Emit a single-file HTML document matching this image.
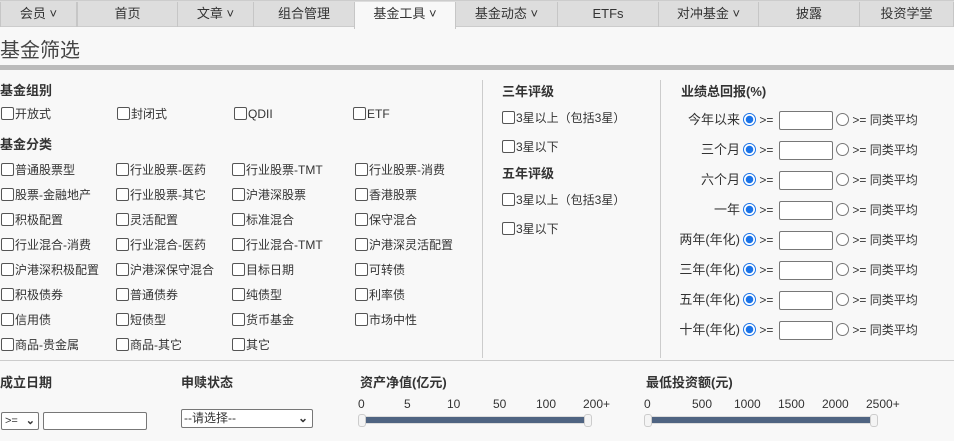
<!DOCTYPE html>
<html><head><meta charset="utf-8"><style>
*{margin:0;padding:0;box-sizing:border-box}
body{width:954px;height:441px;background:#f8f8f8;font-family:"Liberation Sans","Noto Sans CJK SC",sans-serif;font-size:12px;color:#333;position:relative;overflow:hidden}
.a{position:absolute;white-space:nowrap;line-height:14px}
.nav{position:absolute;top:0;left:0;width:954px;height:27px;background:#ddd;border-top:1px solid #ccc;border-bottom:1px solid #ccc}
.t{position:absolute;top:1px;height:25px;line-height:24px;text-align:center;font-size:13px;color:#333;border-right:1px solid #c6c6c6;border-left:1px solid #c6c6c6}
.t.on{background:#f8f8f8;height:27px}
.cb{display:inline-block;width:13px;height:13px;border:1px solid #555;border-radius:2px;background:#fff;vertical-align:-2px;margin-right:1px}
.h{font-weight:bold;font-size:13px;color:#333}
.r{display:inline-block;width:13px;height:13px;border-radius:50%;border:1px solid #777;background:#fff;vertical-align:-2px}
.r.on{border:1px solid #1a73e8;background:radial-gradient(circle,#1a73e8 0 3.5px,#fff 4px)}
.in{display:inline-block;width:54px;height:19px;border:1px solid #777;border-radius:2px;background:#fff;vertical-align:-6px;margin-left:2px}
.lab{display:inline-block;width:80px;text-align:right;font-size:13px;margin-right:3px}
.row{position:absolute;left:660px;white-space:nowrap;line-height:16px;font-size:12px}
</style></head><body>
<div class="nav">
<div class="t" style="left:0;width:77px">会员 ˅</div>
<div class="t" style="left:77px;width:101px">首页</div>
<div class="t" style="left:177px;width:77px">文章 ˅</div>
<div class="t" style="left:253px;width:102px">组合管理</div>
<div class="t on" style="left:354px;width:102px">基金工具 ˅</div>
<div class="t" style="left:455px;width:103px">基金动态 ˅</div>
<div class="t" style="left:557px;width:102px">ETFs</div>
<div class="t" style="left:658px;width:101px">对冲基金 ˅</div>
<div class="t" style="left:758px;width:102px">披露</div>
<div class="t" style="left:859px;width:95px">投资学堂</div>
</div>
<div class="a" style="left:0;top:40px;font-size:20px;line-height:22px;color:#444">基金筛选</div>
<div style="position:absolute;left:0;top:65px;width:954px;height:5px;background:#bbb"></div>
<div style="position:absolute;left:482px;top:80px;width:1px;height:278px;background:#ccc"></div>
<div style="position:absolute;left:660px;top:80px;width:1px;height:278px;background:#ccc"></div>
<div style="position:absolute;left:0;top:360px;width:954px;height:1px;background:#ccc"></div>

<div class="a h" style="left:0;top:84px">基金组别</div>
<div class="a" style="left:1px;top:107px"><span class="cb"></span>开放式</div>
<div class="a" style="left:117px;top:107px"><span class="cb"></span>封闭式</div>
<div class="a" style="left:234px;top:107px"><span class="cb"></span>QDII</div>
<div class="a" style="left:353px;top:107px"><span class="cb"></span>ETF</div>
<div class="a h" style="left:0;top:138px">基金分类</div>
<div class="a" style="left:1px;top:163px"><span class="cb"></span>普通股票型</div><div class="a" style="left:116px;top:163px"><span class="cb"></span>行业股票-医药</div><div class="a" style="left:232px;top:163px"><span class="cb"></span>行业股票-TMT</div><div class="a" style="left:355px;top:163px"><span class="cb"></span>行业股票-消费</div>
<div class="a" style="left:1px;top:188px"><span class="cb"></span>股票-金融地产</div><div class="a" style="left:116px;top:188px"><span class="cb"></span>行业股票-其它</div><div class="a" style="left:232px;top:188px"><span class="cb"></span>沪港深股票</div><div class="a" style="left:355px;top:188px"><span class="cb"></span>香港股票</div>
<div class="a" style="left:1px;top:213px"><span class="cb"></span>积极配置</div><div class="a" style="left:116px;top:213px"><span class="cb"></span>灵活配置</div><div class="a" style="left:232px;top:213px"><span class="cb"></span>标准混合</div><div class="a" style="left:355px;top:213px"><span class="cb"></span>保守混合</div>
<div class="a" style="left:1px;top:238px"><span class="cb"></span>行业混合-消费</div><div class="a" style="left:116px;top:238px"><span class="cb"></span>行业混合-医药</div><div class="a" style="left:232px;top:238px"><span class="cb"></span>行业混合-TMT</div><div class="a" style="left:355px;top:238px"><span class="cb"></span>沪港深灵活配置</div>
<div class="a" style="left:1px;top:263px"><span class="cb"></span>沪港深积极配置</div><div class="a" style="left:116px;top:263px"><span class="cb"></span>沪港深保守混合</div><div class="a" style="left:232px;top:263px"><span class="cb"></span>目标日期</div><div class="a" style="left:355px;top:263px"><span class="cb"></span>可转债</div>
<div class="a" style="left:1px;top:288px"><span class="cb"></span>积极债券</div><div class="a" style="left:116px;top:288px"><span class="cb"></span>普通债券</div><div class="a" style="left:232px;top:288px"><span class="cb"></span>纯债型</div><div class="a" style="left:355px;top:288px"><span class="cb"></span>利率债</div>
<div class="a" style="left:1px;top:313px"><span class="cb"></span>信用债</div><div class="a" style="left:116px;top:313px"><span class="cb"></span>短债型</div><div class="a" style="left:232px;top:313px"><span class="cb"></span>货币基金</div><div class="a" style="left:355px;top:313px"><span class="cb"></span>市场中性</div>
<div class="a" style="left:1px;top:338px"><span class="cb"></span>商品-贵金属</div><div class="a" style="left:116px;top:338px"><span class="cb"></span>商品-其它</div><div class="a" style="left:232px;top:338px"><span class="cb"></span>其它</div>

<div class="a h" style="left:502px;top:85px">三年评级</div>
<div class="a" style="left:502px;top:111px"><span class="cb"></span>3星以上（包括3星）</div>
<div class="a" style="left:502px;top:140px"><span class="cb"></span>3星以下</div>
<div class="a h" style="left:502px;top:167px">五年评级</div>
<div class="a" style="left:502px;top:193px"><span class="cb"></span>3星以上（包括3星）</div>
<div class="a" style="left:502px;top:222px"><span class="cb"></span>3星以下</div>

<div class="a h" style="left:681px;top:85px">业绩总回报(%)</div>
<div class="row" style="top:111px"><span class="lab">今年以来</span><span class="r on"></span> &gt;= <span class="in"></span> <span class="r"></span> &gt;= 同类平均</div>
<div class="row" style="top:141px"><span class="lab">三个月</span><span class="r on"></span> &gt;= <span class="in"></span> <span class="r"></span> &gt;= 同类平均</div>
<div class="row" style="top:171px"><span class="lab">六个月</span><span class="r on"></span> &gt;= <span class="in"></span> <span class="r"></span> &gt;= 同类平均</div>
<div class="row" style="top:201px"><span class="lab">一年</span><span class="r on"></span> &gt;= <span class="in"></span> <span class="r"></span> &gt;= 同类平均</div>
<div class="row" style="top:231px"><span class="lab">两年(年化)</span><span class="r on"></span> &gt;= <span class="in"></span> <span class="r"></span> &gt;= 同类平均</div>
<div class="row" style="top:261px"><span class="lab">三年(年化)</span><span class="r on"></span> &gt;= <span class="in"></span> <span class="r"></span> &gt;= 同类平均</div>
<div class="row" style="top:291px"><span class="lab">五年(年化)</span><span class="r on"></span> &gt;= <span class="in"></span> <span class="r"></span> &gt;= 同类平均</div>
<div class="row" style="top:321px"><span class="lab">十年(年化)</span><span class="r on"></span> &gt;= <span class="in"></span> <span class="r"></span> &gt;= 同类平均</div>

<div class="a h" style="left:0;top:376px">成立日期</div>
<div class="a h" style="left:181px;top:376px">申赎状态</div>
<div class="a h" style="left:360px;top:376px">资产净值(亿元)</div>
<div class="a h" style="left:646px;top:376px">最低投资额(元)</div>
<div style="position:absolute;left:1px;top:412px;width:38px;height:18px;border:1px solid #777;border-radius:2px;background:#fff;font-size:11px;line-height:16px;padding-left:3px">&gt;= <span style="float:right;margin-right:3px;font-weight:bold">⌄</span></div>
<div style="position:absolute;left:43px;top:412px;width:104px;height:18px;border:1px solid #777;border-radius:2px;background:#fff"></div>
<div style="position:absolute;left:181px;top:409px;width:132px;height:19px;border:1px solid #777;border-radius:2px;background:#fff;font-size:12px;line-height:17px;padding-left:2px">--请选择--<span style="float:right;margin-right:4px;font-weight:bold">⌄</span></div>

<div class="a" style="left:358px;top:397px">0</div><div class="a" style="left:404px;top:397px">5</div><div class="a" style="left:447px;top:397px">10</div><div class="a" style="left:493px;top:397px">50</div><div class="a" style="left:536px;top:397px">100</div><div class="a" style="left:583px;top:397px">200+</div>
<div style="position:absolute;left:362px;top:416px;width:226px;height:8px;background:#4f6482;border:1px solid #ddd"></div>
<div style="position:absolute;left:358px;top:414px;width:8px;height:13px;background:#f4f4f4;border:1px solid #ccc;border-radius:3px"></div>
<div style="position:absolute;left:584px;top:414px;width:8px;height:13px;background:#f4f4f4;border:1px solid #ccc;border-radius:3px"></div>

<div class="a" style="left:644px;top:397px">0</div><div class="a" style="left:692px;top:397px">500</div><div class="a" style="left:734px;top:397px">1000</div><div class="a" style="left:778px;top:397px">1500</div><div class="a" style="left:822px;top:397px">2000</div><div class="a" style="left:866px;top:397px">2500+</div>
<div style="position:absolute;left:648px;top:416px;width:226px;height:8px;background:#4f6482;border:1px solid #ddd"></div>
<div style="position:absolute;left:644px;top:414px;width:8px;height:13px;background:#f4f4f4;border:1px solid #ccc;border-radius:3px"></div>
<div style="position:absolute;left:870px;top:414px;width:8px;height:13px;background:#f4f4f4;border:1px solid #ccc;border-radius:3px"></div>
</body></html>
